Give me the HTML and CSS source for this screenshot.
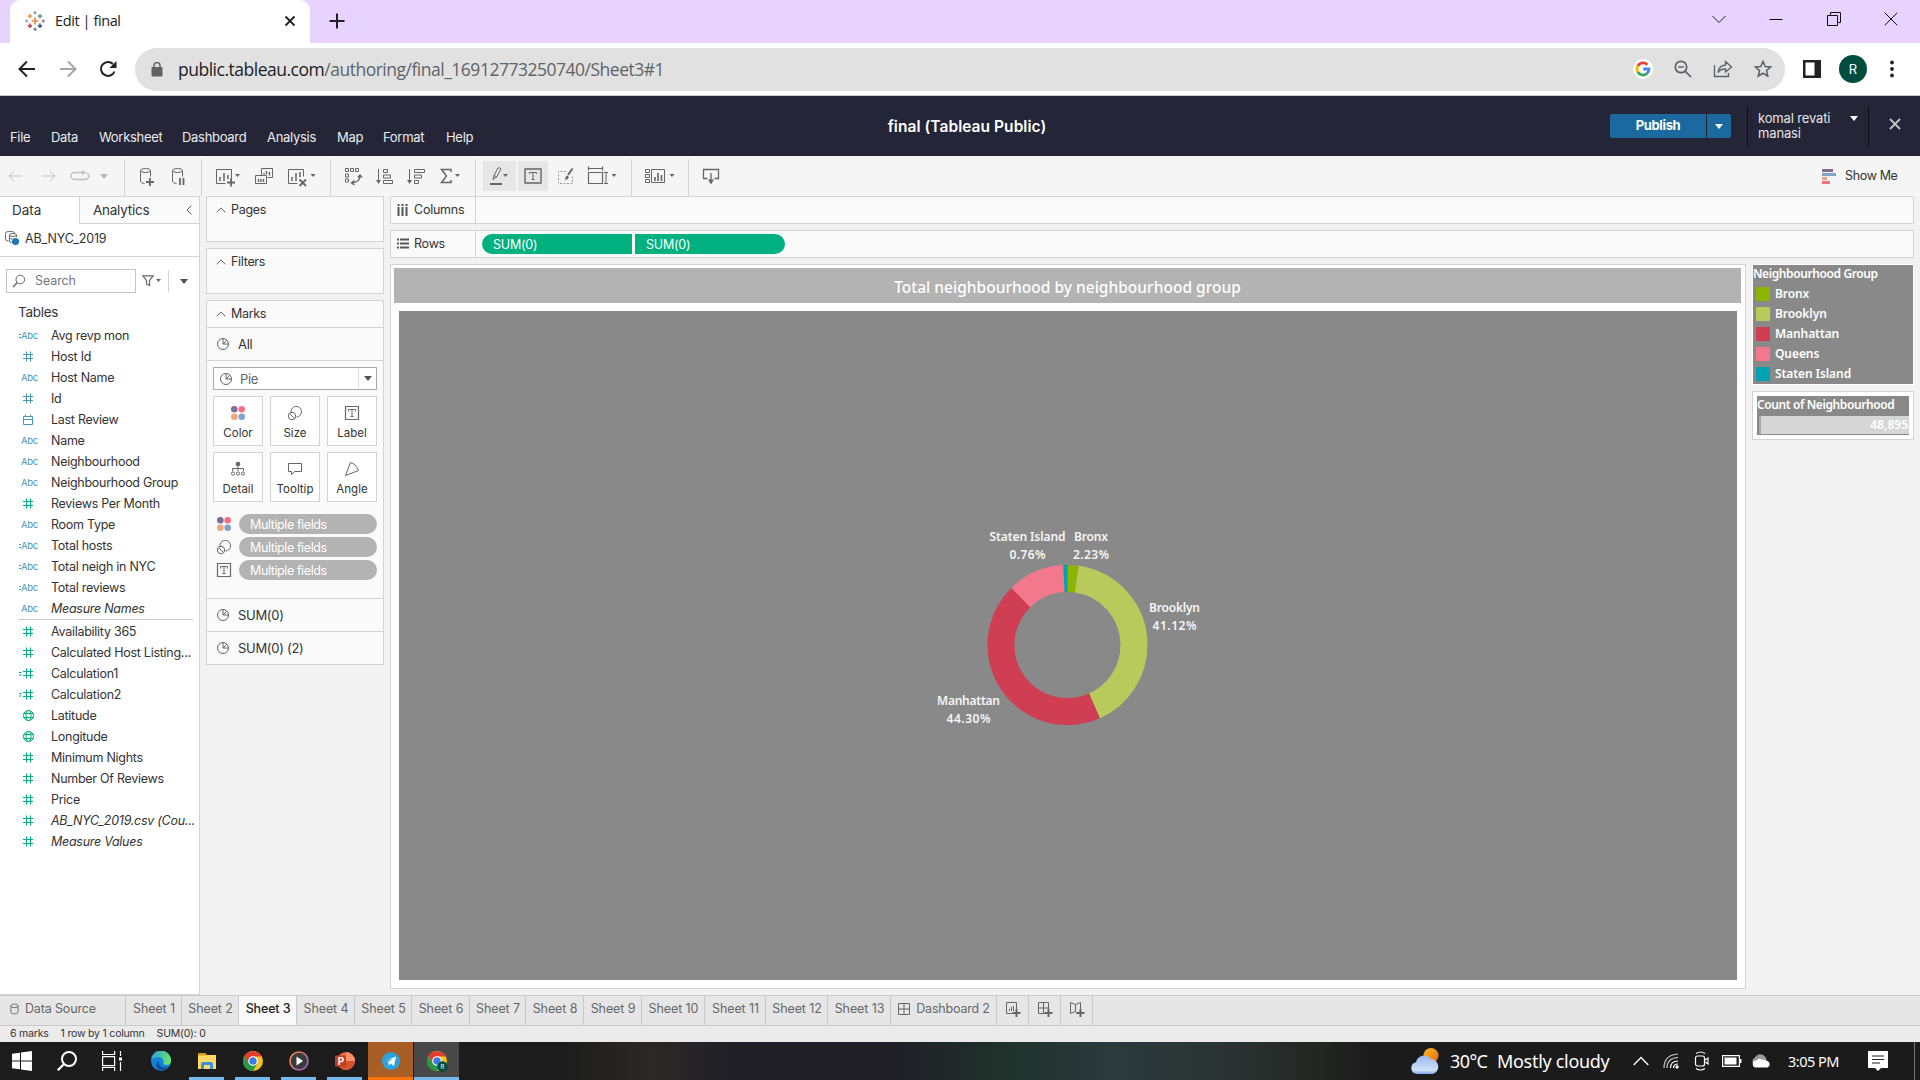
FILE: index.html
```
<!DOCTYPE html>
<html lang="en">
<head>
<meta charset="utf-8">
<title>Edit | final</title>
<link rel="stylesheet" href="styles.css">
</head>
<body>
<svg class="defs" width="0" height="0" aria-hidden="true">
  <symbol id="num" viewBox="0 0 20 14"><path d="M4 4.500h10M4 8.500h10M7.500 1.500v10M11.500 1.500v10" stroke="currentColor"/></symbol>
  <symbol id="cnum" viewBox="0 0 20 14"><path d="M4 4.500h10M4 8.500h10M7.500 1.500v10M11.500 1.500v10M0 5.500h2.500M0 8h2.500" stroke="currentColor"/></symbol>
  <symbol id="cal" viewBox="0 0 20 14"><path d="M4.500 3.500h9v8h-9zM4 6.500h10M6.500 1.500v2M11.500 1.500v2" stroke="currentColor" fill="none"/></symbol>
  <symbol id="globe" viewBox="0 0 20 14"><g stroke="currentColor" fill="none"><circle cx="9.500" cy="6.500" r="5"/><ellipse cx="9.500" cy="6.500" rx="2.500" ry="5"/><path d="M4.500 4.500h10M4.500 8.500h10"/></g></symbol>
  <symbol id="pie" viewBox="0 0 14 14"><g stroke="#666" fill="none"><circle cx="7" cy="7" r="5.500"/><path d="M7 7V1.500M7 7l3.900-3.900M7 7h5.500"/></g></symbol>
  <symbol id="dots4" viewBox="0 0 16 16"><circle cx="4.300" cy="4.300" r="3.300" fill="#806c98"/><circle cx="11.700" cy="4.300" r="3.300" fill="#f76f82"/><circle cx="4.300" cy="11.700" r="3.300" fill="#f5a479"/><circle cx="11.700" cy="11.700" r="3.300" fill="#7ea4cb"/></symbol>
  <symbol id="size" viewBox="0 0 16 16"><g stroke="#666" fill="none"><path d="M4 7.500a5.300 5.300 0 1 1 5.500 4.500"/><circle cx="5" cy="11" r="3.700"/><path d="M3 9l4 4"/></g></symbol>
  <symbol id="label" viewBox="0 0 16 16"><path d="M1.500 1.500h13v13h-13z" fill="none" stroke="#666" stroke-width="1.200"/><path d="M4.500 6.500v-2h7v2M8 4.500v7M6.500 11.500h3" fill="none" stroke="#666"/></symbol>
  <symbol id="up" viewBox="0 0 10 6"><path d="M.7 5.300L5 .9l4.300 4.400" fill="none" stroke="#666"/></symbol>
  <symbol id="caret" viewBox="0 0 8 5"><path d="M0 0h8L4 5z" fill="currentColor"/></symbol>
</svg>

<header class="tabstrip">
  <div class="browser-tab">
    <svg class="favicon" viewBox="0 0 20 20" width="20" height="20"><g stroke-width="1.700" fill="none"><path d="M10 6.500v7M6.500 10h7" stroke="#eb8b3c"/><path d="M5 3v4.400M2.800 5.200h4.400" stroke="#eda04e"/><path d="M15 3v4.400M12.800 5.200h4.400" stroke="#6c98a8"/><path d="M5 12.600v4.400M2.800 14.800h4.400" stroke="#d04a5c"/><path d="M15 12.600v4.400M12.800 14.800h4.400" stroke="#435f93"/></g><g stroke-width="1.100"><path d="M10 0v3.400M8.300 1.700h3.400" stroke="#6c98a8"/><path d="M10 16.600V20M8.300 18.300h3.400" stroke="#5b6591"/><path d="M1.700 8.300v3.400M0 10h3.400" stroke="#7d9fb5"/><path d="M18.300 8.300v3.400M16.600 10H20" stroke="#7771a0"/></g></svg>
    <span class="tab-title">Edit | final</span>
    <svg viewBox="0 0 12 12" width="12" height="12"><path d="M1.500 1.500l9 9M10.500 1.500l-9 9" stroke="#202124" stroke-width="1.800"/></svg>
  </div>
  <svg class="newtab" viewBox="0 0 16 16" width="16" height="16"><path d="M8 .5v15M.5 8h15" stroke="#202124" stroke-width="2"/></svg>
  <div class="window-controls">
    <span><svg viewBox="0 0 14 14" width="14" height="14"><path d="M.5 4L7 10.500 13.500 4" stroke="#222" fill="none"/></svg></span>
    <span><svg viewBox="0 0 14 14" width="14" height="14"><path d="M.5 7.500h13" stroke="#111"/></svg></span>
    <span><svg viewBox="0 0 14 14" width="14" height="14"><path d="M.5 3.500h10v10H.5zM3.500 3.500v-3h10v10h-3" stroke="#111" fill="none"/></svg></span>
    <span><svg viewBox="0 0 14 14" width="14" height="14"><path d="M.7.7l12.600 12.600M13.300.7L.7 13.300" stroke="#111"/></svg></span>
  </div>
</header>

<div class="browser-bar">
  <div class="nav-buttons">
    <span><svg viewBox="0 0 18 18" width="18" height="18"><path d="M17 9H2M9 1.500L1.500 9 9 16.500" fill="none" stroke="#202124" stroke-width="2"/></svg></span>
    <span><svg viewBox="0 0 18 18" width="18" height="18"><path d="M1 9h15M9 1.500L16.500 9 9 16.500" fill="none" stroke="#a4a5a7" stroke-width="2"/></svg></span>
    <span><svg viewBox="0 0 18 18" width="18" height="18"><path d="M15.500 11.500A7 7 0 1 1 14 4" fill="none" stroke="#202124" stroke-width="2"/><path d="M17.500 1v7h-7z" fill="#202124"/></svg></span>
  </div>
  <div class="omnibox">
    <svg viewBox="0 0 12 15" width="12" height="15"><path d="M1.500 5h9q1 0 1 1v7q0 1.500-1 1.500h-9q-1 0-1-1.500V6q0-1 1-1z" fill="#5f6368"/><path d="M3 6V3.500a3 3 0 0 1 6 0V6" fill="none" stroke="#5f6368" stroke-width="1.500"/></svg>
    <span class="url"><b>public.tableau.com</b>/authoring/final_16912773250740/Sheet3#1</span>
    <span class="omni-icon"><svg viewBox="0 0 20 20" width="20" height="20"><circle cx="10" cy="10" r="10" fill="#fff"/><g fill="none" stroke-width="2.800"><path d="M14.400 5.800A6 6 0 0 0 4.800 7" stroke="#ea4335"/><path d="M4.800 7a6 6 0 0 0 0 6" stroke="#fbbc05"/><path d="M4.800 13a6 6 0 0 0 9 1.700" stroke="#34a853"/><path d="M13.800 14.700A6 6 0 0 0 16 10h-5.800" stroke="#4285f4"/></g></svg></span>
    <span class="omni-icon"><svg viewBox="0 0 18 18" width="18" height="18"><g fill="none" stroke="#5f6368" stroke-width="1.700"><circle cx="7" cy="7" r="5.700"/><path d="M11.300 11.300l5.700 5.700M4.200 7h5.600"/></g></svg></span>
    <span class="omni-icon"><svg viewBox="0 0 20 20" width="20" height="20"><path d="M1.500 6v11.500h14V14M12.500 2.500L18.500 8l-6 5V10Q8 9.500 5 13.500 6 6.500 12.500 6z" fill="none" stroke="#5f6368" stroke-width="1.400"/></svg></span>
    <span class="omni-icon"><svg viewBox="0 0 20 20" width="20" height="20"><path d="M10 2.500l2.200 5 5.300.5-4 3.600 1.200 5.400L10 14.200 5.300 17l1.200-5.400-4-3.600 5.300-.5z" fill="none" stroke="#5f6368" stroke-width="1.600"/></svg></span>
  </div>
  <span class="chrome-icon"><svg viewBox="0 0 18 18" width="18" height="18"><path d="M0 0h18v18H0zM2.500 2.500v13h9v-13z" fill="#202124" fill-rule="evenodd"/></svg></span>
  <span class="avatar">R</span>
  <svg class="kebab" viewBox="0 0 4 18" width="4" height="18"><g fill="#202124"><circle cx="2" cy="2.500" r="1.900"/><circle cx="2" cy="9" r="1.900"/><circle cx="2" cy="15.500" r="1.900"/></g></svg>
</div>

<nav class="app-header">
  <div class="menu"><span>File</span><span>Data</span><span>Worksheet</span><span>Dashboard</span><span>Analysis</span><span>Map</span><span>Format</span><span>Help</span></div>
  <div class="doc-title">final (Tableau Public)</div>
  <div class="account">
    <span class="publish">Publish</span><span class="publish-more"><svg width="8" height="5"><use href="#caret"/></svg></span>
    <div class="user"><span>komal revati<br>manasi</span><svg width="8" height="5"><use href="#caret"/></svg></div>
    <svg class="close" viewBox="0 0 12 12" width="12" height="12"><path d="M1 1l10 10M11 1L1 11" stroke="#c3c3ca" stroke-width="1.800"/></svg>
  </div>
</nav>

<div class="toolbar">
  <div class="group g-undo">
    <svg viewBox="0 0 14 12" width="14" height="12"><path d="M14 6H1M6.500.7L1 6l5.500 5.300" fill="none" stroke="#c0c0c0"/></svg>
    <svg viewBox="0 0 14 12" width="14" height="12"><path d="M0 6h13M7.500.7L13 6l-5.500 5.300" fill="none" stroke="#c0c0c0"/></svg>
    <svg viewBox="0 0 20 12" width="20" height="12"><path d="M7 2.500H4.500a3.500 3.500 0 0 0 0 7h11a3.500 3.500 0 0 0 1.500-6.500M6 2.500h7" fill="none" stroke="#c0c0c0" stroke-width="1.400"/><path d="M12 0l4.500 2.500L12 5z" fill="#c0c0c0"/></svg>
    <svg viewBox="0 0 8 5" width="8" height="5"><path d="M0 0h8L4 5z" fill="#b8b8b8"/></svg>
  </div>
  <div class="group g-data">
    <svg viewBox="0 0 24 24" width="24" height="24"><g fill="none" stroke="#666"><ellipse cx="11.500" cy="6.500" rx="5" ry="2"/><path d="M6.500 6.500v11q1 2 4 2M16.500 6.500v6"/><path d="M16 14v8M12 18h8" stroke-width="1.800"/></g></svg>
    <svg viewBox="0 0 24 24" width="24" height="24"><g fill="none" stroke="#666"><ellipse cx="11.500" cy="6.500" rx="5" ry="2"/><path d="M6.500 6.500v11q1 2 4 2M16.500 6.500v6"/><path d="M14 14v7M17.500 14v7" stroke-width="1.800"/></g></svg>
  </div>
  <div class="group g-sheet">
    <svg viewBox="0 0 30 24" width="30" height="24"><g fill="none" stroke="#666"><path d="M12.500 19.500h-9v-14h15v10"/><path d="M7 17v-4M11 17V9M15 15v-4" stroke-width="1.500"/><path d="M18 14.500v8M14 18.500h8" stroke-width="1.800"/></g><path d="M22 10h5l-2.500 3z" fill="#666"/></svg>
    <svg viewBox="0 0 24 24" width="24" height="24"><g fill="none" stroke="#666"><path d="M9.500 11v-6.500h11v9h-5M3.500 11.500h11v8h-11z"/><path d="M12 10.500V9M14.500 10.500V7M17.500 11.500V8M6.500 18v-3M9 18v-3M11.500 18v-3" stroke-width="1.400"/></g></svg>
    <svg viewBox="0 0 32 24" width="32" height="24"><g fill="none" stroke="#666"><path d="M12.500 19.500h-9v-14h15v7"/><path d="M7 17v-4M11 17V9M15 13V8" stroke-width="1.500"/><path d="M14.500 15.500l6.500 6.500M21 15.500L14.500 22" stroke-width="1.800"/></g><path d="M25.500 10h5l-2.500 3z" fill="#666"/></svg>
  </div>
  <div class="group g-sort">
    <svg viewBox="0 0 24 24" width="24" height="24"><g fill="none" stroke="#666"><path d="M4.500 4.500h3v3h-3zM9.500 4.500h3v3h-3zM14.500 4.500h3v3h-3zM4.500 10h3v3h-3zM4.500 15h3v3h-3z"/><path d="M19 12c0 4-2 6-7.500 7M16.800 13.500L19 11l2 2.500M13.500 16.500L10.500 19l3 2" stroke-width="1.300"/></g></svg>
    <svg viewBox="0 0 24 24" width="24" height="24"><g fill="none" stroke="#666"><path d="M6.500 5v13"/><path d="M11.500 5.500h4v3h-4zM11.500 11h7v3h-7zM11.500 16.500h9v3h-9z"/></g><path d="M4 16h5l-2.500 4z" fill="#666"/></svg>
    <svg viewBox="0 0 24 24" width="24" height="24"><g fill="none" stroke="#666"><path d="M6.500 5v13"/><path d="M11.500 5.500h10v3h-10zM11.500 11h7v3h-7zM11.500 16.500h4v3h-4z"/></g><path d="M4 16h5l-2.500 4z" fill="#666"/></svg>
    <svg viewBox="0 0 30 24" width="30" height="24"><path d="M17 8V5.500H7.500l5 6.500-5 6.500H17V16" fill="none" stroke="#666" stroke-width="1.500"/><path d="M21 10h5l-2.500 3z" fill="#666"/></svg>
  </div>
  <div class="group g-format">
    <span class="active wide"><svg viewBox="0 0 33 24" width="33" height="24"><g fill="none" stroke="#666"><path d="M10 15.500l1-4 4-7.500q2-1 3 1L14 12.500l-4 3zM11 11.500l3 1.500"/><path d="M7 20h12" stroke-width="2"/></g><path d="M20 10h5l-2.500 3z" fill="#666"/></svg></span>
    <span class="active"><svg viewBox="0 0 18 16" width="18" height="16"><path d="M1 1h16v14H1z" fill="none" stroke="#666" stroke-width="1.400"/><path d="M5.500 6V4.500h7V6M9 4.500v7M7.500 11.500h3" fill="none" stroke="#666"/></svg></span>
    <svg class="brush" viewBox="0 0 24 24" width="24" height="24"><path d="M13 7.500H5.500v12h14V12" fill="none" stroke="#999" stroke-dasharray="2 1.500"/><path d="M19.500 4.500l-4.500 6.500" stroke="#666" stroke-width="2"/><path d="M14 11.500l1.800 1.500q-.8 3-4.300 3 1.500-1 1.200-3.200z" fill="#666"/></svg>
    <svg class="fit" viewBox="0 0 34 24" width="34" height="24"><g fill="none" stroke="#666"><path d="M3 4.500h15M3.500 2.500v4M17.500 2.500v4M3.500 8.500h14v11h-14z" stroke-width="1.200"/><path d="M21 8.500v11M19 8.500h4M19 19.500h4"/></g><path d="M26.500 10h5L29 13z" fill="#666"/></svg>
  </div>
  <div class="group g-cards">
    <svg viewBox="0 0 36 24" width="36" height="24"><g fill="none" stroke="#666"><path d="M4.500 5.500h4v3h-4zM4.500 10.500h4v3h-4zM4.500 15.500h4v3h-4zM10.500 5.500h13v13h-13z"/><path d="M14 17v-4M17 17V9M20.500 17v-6" stroke-width="1.600"/></g><path d="M28.500 10h5L31 13z" fill="#666"/></svg>
  </div>
  <div class="group g-export">
    <svg viewBox="0 0 24 24" width="24" height="24"><path d="M8.500 14.500h-4v-9h15v9h-4M12 9v8" fill="none" stroke="#666" stroke-width="1.300"/><path d="M9 15.500h6l-3 5z" fill="#666"/></svg>
  </div>
  <div class="show-me"><svg viewBox="0 0 14 15" width="14" height="15"><path d="M0 0h11v3H0z" fill="#806c98"/><path d="M0 4h14v3H0z" fill="#7ea4cb"/><path d="M0 8h5v3H0z" fill="#f5a479"/><path d="M0 12h8v3H0z" fill="#f76f82"/></svg>Show Me</div>
</div>

<main class="workspace">
  <aside class="data-pane">
    <div class="pane-tabs"><span class="on">Data</span><span class="off">Analytics<svg viewBox="0 0 6 10" width="6" height="10"><path d="M5.300.7L1 5l4.300 4.300" fill="none" stroke="#555"/></svg></span></div>
    <div class="source"><svg viewBox="0 0 15 15" width="15" height="15"><g fill="none" stroke="#666"><path d="M3.500 10Q.5 10 .5 8V2.500q0-2 3-2h3q3 0 3 1.500"/><ellipse cx="8" cy="4" rx="3.500" ry="1.500"/><path d="M4.500 4v6q0 1.500 2 1.500M11.500 4v2M4.500 7q1 1 3 1"/></g><circle cx="10.500" cy="10.500" r="3.600" fill="#1f77b4"/></svg>AB_NYC_2019</div>
    <div class="search-row">
      <div class="search"><svg viewBox="0 0 14 14" width="14" height="14"><circle cx="8.300" cy="5.500" r="4.300" fill="none" stroke="#666"/><path d="M5.300 8.500L1 13" stroke="#666" stroke-width="1.400"/></svg>Search</div>
      <svg class="filter" viewBox="0 0 20 12" width="20" height="12"><path d="M.8.8h10.400L7.500 5.500v5L4.500 9V5.500z" fill="none" stroke="#666" stroke-width="1.200"/><path d="M14 4h5l-2.500 3z" fill="#666"/></svg>
      <span class="more"><svg width="8" height="5"><use href="#caret"/></svg></span>
    </div>
    <h3>Tables</h3>
    <ul class="fields">
      <li><b class="calc">Abc</b>Avg revp mon</li>
      <li><svg><use href="#num"/></svg>Host Id</li>
      <li><b>Abc</b>Host Name</li>
      <li><svg><use href="#num"/></svg>Id</li>
      <li><svg><use href="#cal"/></svg>Last Review</li>
      <li><b>Abc</b>Name</li>
      <li><b>Abc</b>Neighbourhood</li>
      <li><b>Abc</b>Neighbourhood Group</li>
      <li class="measure"><svg><use href="#num"/></svg>Reviews Per Month</li>
      <li><b>Abc</b>Room Type</li>
      <li><b class="calc">Abc</b>Total hosts</li>
      <li><b class="calc">Abc</b>Total neigh in NYC</li>
      <li><b class="calc">Abc</b>Total reviews</li>
      <li><b>Abc</b><i>Measure Names</i></li>
    </ul>
    <ul class="fields measures">
      <li><svg><use href="#num"/></svg>Availability 365</li>
      <li><svg><use href="#num"/></svg>Calculated Host Listing...</li>
      <li><svg><use href="#cnum"/></svg>Calculation1</li>
      <li><svg><use href="#cnum"/></svg>Calculation2</li>
      <li><svg><use href="#globe"/></svg>Latitude</li>
      <li><svg><use href="#globe"/></svg>Longitude</li>
      <li><svg><use href="#num"/></svg>Minimum Nights</li>
      <li><svg><use href="#num"/></svg>Number Of Reviews</li>
      <li><svg><use href="#num"/></svg>Price</li>
      <li><svg><use href="#num"/></svg><i>AB_NYC_2019.csv (Cou...</i></li>
      <li><svg><use href="#num"/></svg><i>Measure Values</i></li>
    </ul>
  </aside>

  <div class="cards">
    <section class="card small"><h4><svg width="10" height="6"><use href="#up"/></svg>Pages</h4></section>
    <section class="card small"><h4><svg width="10" height="6"><use href="#up"/></svg>Filters</h4></section>
    <section class="card marks">
      <h4><svg width="10" height="6"><use href="#up"/></svg>Marks</h4>
      <div class="mark-row"><svg width="14" height="14"><use href="#pie"/></svg>All</div>
      <div class="mark-body">
        <div class="select"><svg width="14" height="14"><use href="#pie"/></svg>Pie<span class="drop"><svg width="8" height="5"><use href="#caret"/></svg></span></div>
        <div class="mark-buttons">
          <div><svg width="16" height="16"><use href="#dots4"/></svg>Color</div>
          <div><svg width="16" height="16"><use href="#size"/></svg>Size</div>
          <div><svg width="16" height="16"><use href="#label"/></svg>Label</div>
          <div><svg viewBox="0 0 16 16" width="16" height="16"><circle cx="8" cy="3" r="2.300" fill="#666"/><g fill="none" stroke="#666"><path d="M8 4v6M2.500 10V7.500h11V10"/><circle cx="3" cy="12.500" r="1.600"/><circle cx="8" cy="12.500" r="1.600"/><circle cx="13" cy="12.500" r="1.600"/></g></svg>Detail</div>
          <div><svg viewBox="0 0 16 16" width="16" height="16"><path d="M1.500 2.500h13v8H7.500l-3 3v-3h-3z" fill="none" stroke="#666"/></svg>Tooltip</div>
          <div><svg viewBox="0 0 16 16" width="16" height="16"><path d="M1.500 14.500L6.500 1.500Q12 3 14.500 9.500z" fill="none" stroke="#666"/></svg>Angle</div>
        </div>
        <div class="pill-row"><svg width="16" height="16"><use href="#dots4"/></svg><span>Multiple fields</span></div>
        <div class="pill-row"><svg width="16" height="16"><use href="#size"/></svg><span>Multiple fields</span></div>
        <div class="pill-row"><svg width="16" height="16"><use href="#label"/></svg><span>Multiple fields</span></div>
      </div>
      <div class="mark-row"><svg width="14" height="14"><use href="#pie"/></svg>SUM(0)</div>
      <div class="mark-row"><svg width="14" height="14"><use href="#pie"/></svg>SUM(0) (2)</div>
    </section>
  </div>

  <div class="canvas">
    <div class="shelf"><div class="shelf-label"><svg viewBox="0 0 12 12" width="12" height="12"><path d="M1.500 3v9M5.500 3v9M9.500 3v9M1.500 0v2M5.500 0v2M9.500 0v2" stroke="#555" stroke-width="2"/></svg>Columns</div></div>
    <div class="shelf"><div class="shelf-label"><svg viewBox="0 0 12 12" width="12" height="12"><path d="M3 1.500h9M3 5.500h9M3 9.500h9M0 1.500h2M0 5.500h2M0 9.500h2" stroke="#555" stroke-width="2"/></svg>Rows</div><span class="green first">SUM(0)</span><span class="green end">SUM(0)</span></div>
    <div class="view-row">
      <section class="sheet">
        <h2>Total neighbourhood by neighbourhood group</h2>
        <svg class="chart" viewBox="399 311 1338 669" width="1338" height="669">
          <rect x="399" y="311" width="1338" height="669" fill="#898989"/>
          <g fill="none" stroke-width="27" transform="rotate(-90 1067.500 645)">
            <circle cx="1067.500" cy="645" r="66.500" pathLength="100" stroke="#8cb400" stroke-dasharray="2.230 97.770"/>
            <circle cx="1067.500" cy="645" r="66.500" pathLength="100" stroke="#b9ca5d" stroke-dasharray="41.120 58.880" stroke-dashoffset="-2.230"/>
            <circle cx="1067.500" cy="645" r="66.500" pathLength="100" stroke="#cf3e53" stroke-dasharray="44.300 55.700" stroke-dashoffset="-43.350"/>
            <circle cx="1067.500" cy="645" r="66.500" pathLength="100" stroke="#f4788c" stroke-dasharray="11.490 88.510" stroke-dashoffset="-87.650"/>
            <circle cx="1067.500" cy="645" r="66.500" pathLength="100" stroke="#00a2b3" stroke-dasharray="0.860 99.140" stroke-dashoffset="-99.140"/>
          </g>
          <g class="chart-labels" text-anchor="middle">
            <text x="1027.500" y="541" textLength="76">Staten Island</text><text x="1027.500" y="559" textLength="36">0.76%</text>
            <text x="1091" y="541" textLength="34">Bronx</text><text x="1091" y="559" textLength="36">2.23%</text>
            <text x="1174.500" y="612" textLength="51">Brooklyn</text><text x="1174.500" y="630" textLength="44">41.12%</text>
            <text x="968.500" y="705" textLength="63">Manhattan</text><text x="968.500" y="723" textLength="44">44.30%</text>
          </g>
        </svg>
      </section>
      <div class="legends">
        <section class="legend">
          <h5>Neighbourhood Group</h5>
          <div><i class="c1"></i>Bronx</div><div><i class="c2"></i>Brooklyn</div><div><i class="c3"></i>Manhattan</div><div><i class="c4"></i>Queens</div><div><i class="c5"></i>Staten Island</div>
        </section>
        <section class="count"><div class="count-inner"><h5>Count of Neighbourhood</h5><div class="ramp">48,895</div></div></section>
      </div>
    </div>
  </div>
</main>

<div class="sheet-tabs">
  <span class="source-tab"><svg viewBox="0 0 10 12" width="9" height="12"><path d="M1 2.500v7q0 2 4 2t4-2v-7q0-2-4-2t-4 2q0 2 4 2t4-2" fill="none" stroke="#666"/></svg>Data Source</span>
  <span>Sheet 1</span><span>Sheet 2</span><span class="current">Sheet 3</span><span>Sheet 4</span><span>Sheet 5</span><span>Sheet 6</span><span>Sheet 7</span><span>Sheet 8</span><span>Sheet 9</span><span>Sheet 10</span><span>Sheet 11</span><span>Sheet 12</span><span>Sheet 13</span>
  <span class="dash"><svg viewBox="0 0 12 12" width="12" height="12"><path d="M.5.5h11v11H.5zM6 .5v11M.5 6h11" fill="none" stroke="#666"/></svg>Dashboard 2</span>
  <span><svg viewBox="0 0 16 16" width="16" height="16"><path d="M8 12.500H1.500v-11h10V9M4.500 10V8M6.500 10V6M8.500 10V5" fill="none" stroke="#666"/><path d="M11.500 8v8M7.500 12h8" stroke="#666" stroke-width="2"/></svg></span>
  <span><svg viewBox="0 0 16 16" width="16" height="16"><path d="M8 12.500H1.500v-11h10V9M6.500 1.500v11M1.500 7h10" fill="none" stroke="#666"/><path d="M11.500 8v8M7.500 12h8" stroke="#666" stroke-width="2"/></svg></span>
  <span><svg viewBox="0 0 16 16" width="16" height="16"><path d="M8 12L6.500 10.500 1.500 12.500v-11L6.500 3.500l5-2V8M6.500 3.500v7" fill="none" stroke="#666"/><path d="M11.500 8v8M7.500 12h8" stroke="#666" stroke-width="2"/></svg></span>
</div>
<div class="status"><span>6 marks</span><span>1 row by 1 column</span><span>SUM(0): 0</span></div>

<footer class="taskbar">
  <div class="apps">
    <span><svg viewBox="0 0 20 20" width="20" height="20"><path d="M0 2.800L8 1.700v7.800H0zM9 1.500L20 0v9.500H9zM0 10.500h8v7.800l-8-1.100zM9 10.500h11V20L9 18.500z" fill="#fff"/></svg></span>
    <span><svg viewBox="0 0 20 20" width="20" height="20"><circle cx="12" cy="8" r="7" fill="none" stroke="#fff" stroke-width="2"/><path d="M7 13l-6.300 6.300" stroke="#fff" stroke-width="2.200"/></svg></span>
    <span><svg viewBox="0 0 20 20" width="20" height="20"><g fill="none" stroke="#fff" stroke-width="1.200"><path d="M.6 0v3.500h12V0M.6 5.600h12v9H.6zM.6 20v-3.500h12V20M18.500 0v5M18.500 11v9"/></g><path d="M17 6.500h3v3h-3z" fill="#fff"/></svg></span>
    <span><svg viewBox="0 0 20 20" width="20" height="20"><defs><linearGradient id="edge" x1="0" y1="0" x2="1" y2=".3"><stop offset="0" stop-color="#249fe0"/><stop offset="1" stop-color="#67df75"/></linearGradient></defs><circle cx="10" cy="10" r="10" fill="#1482d8"/><path d="M0 9a10 10 0 0 1 20 1q0 4-5 4-3 0-2.500-2Q13 6.500 7.500 6 2 6 0 9z" fill="url(#edge)"/><path d="M7 18.500Q3 13 7.500 9.500q-.5 6 5.500 7 3 .5 6-1.500a10 10 0 0 1-12 3.500z" fill="#0d4f9b"/></svg></span>
    <span class="open"><svg viewBox="0 0 20 20" width="20" height="20"><path d="M1 2h7l2 2h9v14H1z" fill="#ffd866"/><path d="M1 2h7l1.500 2.500H1z" fill="#d99b17"/><path d="M4 18v-5q0-2 2-2h8q2 0 2 2v5h-3v-4H7v4z" fill="#3791dc"/></svg></span>
    <span class="open"><svg viewBox="0 0 20 20" width="20" height="20" id="chrome-logo"><circle cx="10" cy="10" r="10" fill="#fbc116"/><path d="M1.300 5A10 10 0 0 1 18.700 5.500H10L5.700 12.500z" fill="#e33b2e"/><path d="M1.300 5A10 10 0 0 0 10 20l4.300-7.500H5.700z" fill="#279847"/><circle cx="10" cy="10" r="4.800" fill="#fff"/><circle cx="10" cy="10" r="3.700" fill="#3a7de9"/></svg></span>
    <span class="open"><svg viewBox="0 0 20 20" width="20" height="20"><defs><linearGradient id="play" x1="0" y1="0" x2="1" y2="1"><stop offset="0" stop-color="#ff8a3c"/><stop offset="1" stop-color="#8e5bd0"/></linearGradient></defs><circle cx="10" cy="10" r="9" fill="#3b3b3d" stroke="url(#play)" stroke-width="1.700"/><path d="M7.500 5.500l6.500 4.500-6.500 4.500z" fill="#fff"/></svg></span>
    <span class="open"><svg viewBox="0 0 20 20" width="20" height="20"><circle cx="11" cy="10" r="9" fill="#ed6c47"/><path d="M11 10h9a9 9 0 0 1-17 4z" fill="#d35230"/><path d="M11 1a9 9 0 0 1 9 9h-9z" fill="#ff8f6b"/><rect x="0" y="4.500" width="11" height="11" rx="1" fill="#c43e1c"/><text x="2.700" y="13.500" class="ppt">P</text></svg></span>
    <span class="alert"><svg viewBox="0 0 20 20" width="20" height="20"><circle cx="10" cy="10" r="9" fill="#2ba3dc"/><path d="M3.500 10l11.500-4.500-2 9.500-3.500-2.500-1.700 2-.8-3.500 5-3.500z" fill="#fff"/></svg></span>
    <span class="focused"><svg viewBox="0 0 22 22" width="22" height="22"><use href="#chrome-logo"/><circle cx="15.500" cy="15.500" r="5.200" fill="#004d40"/><text x="13.500" y="18" class="mini">R</text></svg></span>
  </div>
  <div class="tray">
    <svg class="weather" viewBox="0 0 30 26" width="30" height="26"><defs><linearGradient id="sun" x1="0" y1="0" x2="1" y2="1"><stop offset="0" stop-color="#f6b72b"/><stop offset="1" stop-color="#ef6a05"/></linearGradient><linearGradient id="cloud" x1="0" y1="0" x2="0" y2="1"><stop offset="0" stop-color="#98b9f3"/><stop offset=".8" stop-color="#cfe0f8"/><stop offset="1" stop-color="#7b9fe8"/></linearGradient></defs><circle cx="21" cy="7.500" r="7.500" fill="url(#sun)"/><path d="M6.500 26a6 6 0 0 1-.5-11.800 8.500 8.500 0 0 1 15-3.200 7.700 7.700 0 0 1 2 15z" fill="url(#cloud)"/></svg>
    <span class="temp">30°C</span><span class="cond">Mostly cloudy</span>
    <svg class="t1" viewBox="0 0 16 10" width="16" height="10"><path d="M.7 9L8 1.500 15.300 9" fill="none" stroke="#fff" stroke-width="1.300"/></svg>
    <svg class="t2" viewBox="0 0 16 16" width="16" height="16"><g fill="none" stroke="#fff" stroke-width="1.200"><path d="M1 15Q1 2 15 1M4 15q0-10 11-10.500" opacity=".75"/><path d="M7.500 15q0-7 7.500-7M10.500 15q0-4 4.500-4"/></g><circle cx="14" cy="14" r="1.700" fill="#fff"/></svg>
    <svg class="t3" viewBox="0 0 16 20" width="16" height="20"><g fill="none" stroke="#fff" stroke-width="1.200"><rect x="1.500" y="5" width="9" height="10" rx="2"/><path d="M11 9l3-2v6l-3-2M2 2.500Q6.500-.5 11 2.500M2 17.500q4.500 3 9 0"/></g></svg>
    <svg class="t4" viewBox="0 0 20 12" width="20" height="12"><path d="M.6.600h16.800v10.800H.6z" fill="none" stroke="#fff" stroke-width="1.200"/><path d="M2.500 2.500h12v7h-12zM18 4h1.500v4H18z" fill="#fff"/></svg>
    <svg class="t5" viewBox="0 0 20 14" width="20" height="14"><path d="M4 11a4 4 0 0 1 0-7.500 6 6 0 0 1 10.500-.5l1 3z" fill="#999"/><path d="M5 13.500a3.500 3.500 0 0 1 .5-7q2-3 5.500-1 4 0 5.500 1.500a3.500 3.500 0 0 1 0 6.500z" fill="#fff"/></svg>
    <span class="time">3:05 PM</span>
    <svg class="notes" viewBox="0 0 20 20" width="20" height="20"><path d="M0 0h20v17h-7l-3 3-3-3H0z" fill="#fff"/><path d="M4 5h12M4 8.500h12M4 12h8" stroke="#222" stroke-width="1.200"/></svg>
    <i class="desk"></i>
  </div>
</footer>
</body>
</html>
```
FILE: styles.css
```
* { box-sizing: border-box; }
body { margin: 0; width: 1920px; height: 1080px; overflow: hidden; display: flex; flex-direction: column; background: #f2f2f2; color: #333; font: 13px/16px Inter, "Liberation Sans", sans-serif; }
svg { display: block; flex: none; }
.defs { position: absolute; }
h2, h3, h4, h5, ul { margin: 0; padding: 0; font-weight: 400; }

/* Browser chrome */
.tabstrip { height: 43px; background: #e8d3ff; display: flex; align-items: flex-start; padding-left: 10px; font-family: "Open Sans", sans-serif; }
.browser-tab { width: 300px; height: 43px; background: #fff; border-radius: 10px 10px 0 0; display: flex; align-items: center; padding: 0 14px 1px 15px; }
.tab-title { flex: 1; margin-left: 10px; font-size: 14.500px; letter-spacing: -.4px; color: #202124; }
.newtab { margin: 13px 0 0 19px; }
.window-controls { margin-left: auto; display: flex; height: 38px; }
.window-controls span { width: 57.500px; display: flex; align-items: center; justify-content: center; }
.browser-bar { height: 53px; background: #fff; border-bottom: 1px solid #c9c9c9; display: flex; align-items: center; padding: 0 26px 0 7px; }
.nav-buttons { display: flex; width: 128px; }
.nav-buttons span { width: 40.500px; display: flex; justify-content: center; }
.omnibox { width: 1650px; height: 43px; border-radius: 22px; background: #e1e1e1; display: flex; align-items: center; padding: 0 2px 0 16px; }
.url { flex: 1; margin-left: 15px; font: 17.500px/24px "Open Sans", sans-serif; letter-spacing: -.49px; color: #606367; }
.url b { font-weight: 400; color: #202124; }
.omni-icon { width: 40px; display: flex; justify-content: center; }
.chrome-icon { margin-left: 18px; }
.avatar { margin-left: 18px; width: 28px; height: 28px; border-radius: 50%; background: #004d40; color: #fff; text-align: center; line-height: 28px; font-size: 13px; }
.kebab { margin-left: auto; }

/* Application header */
.app-header { height: 60px; background: #242638; color: #ebebee; display: grid; grid-template-columns: 600px 1fr 320px; }
.menu { display: grid; grid-template-columns: 41px 48px 83px 85px 70px 46px 63px 40px; padding: 33px 0 0 10px; font-size: 13px; letter-spacing: -.3px; }
.doc-title { justify-self: center; margin: 21px 266px 0 0; font-size: 15.500px; line-height: 19px; font-weight: 600; color: #fff; width: max-content; letter-spacing: .05px; }
.account { display: flex; align-items: flex-start; padding: 10px 0 0 10px; color: #fff; }
.publish { width: 96px; height: 24px; margin-top: 8px; background: #1b699f; border-radius: 2px 0 0 2px; text-align: center; line-height: 23px; font-weight: 700; letter-spacing: -.35px; }
.publish-more { width: 24px; height: 24px; margin: 8px 0 0 1px; background: #1b699f; border-radius: 0 2px 2px 0; display: flex; align-items: center; justify-content: center; }
.user { margin-left: 16px; width: 122px; height: 40px; border: solid #0e0f16; border-width: 0 1px; display: flex; justify-content: space-between; padding: 5px 10px 0 10px; line-height: 15px; color: #e4e4e8; letter-spacing: -.15px; }
.user svg { margin-top: 5px; color: #fff; }
.close { margin: 12px 0 0 20px; }

/* Toolbar */
.toolbar { height: 40px; background: #f5f5f5; display: flex; }
.group { height: 37px; margin-top: 3px; border-right: 1px solid #d3d3d3; display: flex; align-items: center; padding-bottom: 3px; }
.g-undo { width: 125px; padding-left: 8px; gap: 15px; }
.g-undo svg:nth-child(2) { margin-left: 5px; }
.g-undo svg:nth-child(3) { margin-left: -1px; }
.g-undo svg:nth-child(4) { margin-left: -5px; }
.g-data { width: 77px; padding-left: 9px; gap: 8px; }
.g-sheet { width: 129px; padding-left: 11px; gap: 9px; }
.g-sort { width: 145px; padding-left: 10px; gap: 7px; }
.g-format { width: 156px; padding-left: 7px; }
.active { width: 30px; height: 30px; margin-left: 2px; background: #e6e6e6; display: flex; align-items: center; justify-content: center; }
.active.wide { width: 33px; margin-left: 0; }
.brush { margin-left: 5px; }
.fit { margin-left: 8px; }
.g-cards { width: 57px; padding-left: 9px; }
.g-export { padding-left: 10px; border: 0; }
.show-me { margin-left: auto; width: 98px; display: flex; align-items: center; gap: 9px; font-size: 12.500px; letter-spacing: -.35px; }

/* Data pane */
.workspace { height: 799px; display: flex; align-items: flex-start; }
.data-pane { width: 200px; height: 799px; background: #fff; border: solid #d3d3d3; border-width: 1px 1px 1px 0; }
.pane-tabs { display: flex; height: 27px; font-size: 13.500px; line-height: 27px; }
.on { width: 79px; padding-left: 12px; }
.off { flex: 1; background: #fafafa; border: solid #d3d3d3; border-width: 0 0 1px 1px; padding: 0 7px 0 13px; display: flex; align-items: center; justify-content: space-between; letter-spacing: -.25px; }
.source { height: 33px; border-bottom: 1px solid #d3d3d3; display: flex; gap: 5px; padding: 7px 0 0 5px; font-size: 12.500px; letter-spacing: -.15px; }
.search-row { display: flex; align-items: center; padding: 12px 0 0 6px; }
.search { width: 130px; height: 24px; border: 1px solid #c4c4c4; display: flex; align-items: center; gap: 9px; padding-left: 5px; color: #777; font-size: 12.500px; letter-spacing: -.1px; }
.filter { margin-left: 6px; }
.more { margin-left: 6px; height: 22px; border-left: 1px solid #d3d3d3; display: flex; align-items: center; padding-left: 11px; color: #555; }
h3 { font-size: 13.500px; line-height: 18px; margin: 10px 0 4px 18px; letter-spacing: -.3px; }
.fields { list-style: none; padding-left: 19px; }
.fields li { height: 21px; display: flex; align-items: center; gap: 12px; white-space: nowrap; font-size: 12.500px; letter-spacing: -.27px; line-height: 21px; }
.fields svg { width: 20px; height: 14px; color: #4996b2; }
.fields b { width: 20px; padding-left: 2px; font-size: 9.500px; font-weight: 400; letter-spacing: -.3px; color: #4996b2; }
.fields .calc { background: linear-gradient(#4996b2 1px, transparent 1px 3px, #4996b2 3px 4px) 0 9px / 2px 4px no-repeat; }
.measure svg, .measures svg { color: #00b180; }
.measures { border-top: 1px solid #c9c9c9; margin: 0 6px 0 18px; padding: 1px 0 0 1px; }

/* Cards */
.cards { width: 178px; margin-left: 6px; display: flex; flex-direction: column; gap: 6px; }
.card { background: #fafafa; border: 1px solid #d3d3d3; }
.small { height: 46px; }
h4 { height: 26px; display: flex; align-items: center; gap: 5px; padding-left: 9px; font-size: 12.500px; letter-spacing: -.3px; }
.marks { height: 365px; }
.mark-row { height: 33px; border-top: 1px solid #d3d3d3; display: flex; align-items: center; gap: 8px; padding-left: 9px; letter-spacing: -.3px; }
.mark-body { height: 238px; border-top: 1px solid #d3d3d3; padding: 6px; }
.select { height: 23px; border: 1px solid #aaa; background: #fff; display: flex; align-items: center; gap: 7px; padding-left: 5px; color: #666; letter-spacing: -.3px; }
.drop { margin-left: auto; width: 18px; height: 21px; border-left: 1px solid #ddd; display: flex; align-items: center; justify-content: center; color: #555; }
.mark-buttons { display: grid; grid-template-columns: repeat(3, 50px); gap: 6px 7px; margin: 6px 0 12px; }
.mark-buttons div { height: 50px; border: 1px solid #d3d3d3; background: #fff; display: flex; flex-direction: column; align-items: center; gap: 4px; padding-top: 8px; font-size: 11.500px; line-height: 16px; letter-spacing: 0; }
.pill-row { display: flex; align-items: center; gap: 7px; height: 20px; margin-bottom: 3px; padding-left: 3px; }
.pill-row span { flex: 1; height: 20px; border-radius: 10px; background: #b3b3b3; color: #fff; padding-left: 11px; font-size: 12.500px; line-height: 22px; letter-spacing: -.4px; }

/* Shelves and worksheet */
.canvas { width: 1524px; margin-left: 6px; display: flex; flex-direction: column; gap: 6px; }
.shelf { height: 28px; background: #fafafa; border: 1px solid #d3d3d3; display: flex; align-items: center; }
.shelf-label { width: 85px; height: 26px; border-right: 1px solid #d3d3d3; display: flex; align-items: center; gap: 5px; padding-left: 6px; font-size: 12.500px; letter-spacing: -.25px; }
.green { width: 150px; height: 20px; background: #00b180; color: #fff; line-height: 22px; padding-left: 11px; font-size: 12.500px; letter-spacing: -.2px; }
.first { margin-left: 6px; border-radius: 10px 0 0 10px; }
.end { margin-left: 3px; border-radius: 0 10px 10px 0; }
.view-row { display: flex; align-items: flex-start; gap: 6px; }
.sheet { width: 1356px; height: 725px; background: #fff; border: 1px solid #d3d3d3; padding: 3px 4px 0 3px; }
h2 { height: 35px; background: #b3b3b3; color: #fff; text-align: center; font: 500 15.500px/38px "Noto Sans", sans-serif; letter-spacing: .02px; }
.chart { margin: 8px 0 0 5px; }
.chart-labels { fill: #f5f5f5; font: 600 12px "Noto Sans", sans-serif; }
.legends { width: 162px; display: flex; flex-direction: column; gap: 6px; color: #fff; font: 600 12px/20px "Noto Sans", sans-serif; }
.legend { height: 121px; background: #898989; border: 1px solid #fff; }
h5 { font: 600 12px/18px "Noto Sans", sans-serif; letter-spacing: -.4px; white-space: nowrap; }
.legend h5 { height: 19px; }
.legend div { height: 20px; display: flex; align-items: center; gap: 5px; padding-left: 3px; letter-spacing: -.08px; }
.legend i { width: 14px; height: 14px; border-radius: 1px; }
.c1 { background: #8cb400; } .c2 { background: #b9ca5d; } .c3 { background: #cf3e53; } .c4 { background: #f4788c; } .c5 { background: #00a2b3; }
.count { height: 49px; border: 1px solid #d3d3d3; background: #fff; padding: 4px; }
.count-inner { height: 39px; background: #898989; }
.count h5 { height: 20px; }
.ramp { margin-left: 2px; height: 18px; background: linear-gradient(90deg, #aaa 2px, #d6d6d6 2px); text-align: right; line-height: 18px; padding-right: 1px; }

/* Sheet tabs and status */
.sheet-tabs { height: 31px; background: #e6e6e6; border: solid #c9c9c9; border-width: 1px 0; display: grid; grid-template-columns: 126px 56px 57px 58px 58px 57px 58px 56px 58px 58px 63px 61px 62px 63px 106px 32px 32px 32px; color: #666; font-size: 12.500px; letter-spacing: -.1px; }
.sheet-tabs span { border-right: 1px solid #c9c9c9; display: flex; align-items: center; justify-content: center; padding: 0 0 4px 1px; white-space: nowrap; }
.sheet-tabs .source-tab { justify-content: flex-start; gap: 6px; padding-left: 10px; letter-spacing: -.15px; }
.sheet-tabs .dash { gap: 6px; letter-spacing: -.2px; }
.sheet-tabs .current { background: #fafafa; color: #222; font-weight: 500; letter-spacing: -.15px; }
.status { height: 16px; background: #ebebeb; display: flex; gap: 12px; padding-left: 10px; font-size: 10.500px; line-height: 16px; letter-spacing: -.2px; }

/* Windows taskbar */
.taskbar { height: 38px; display: flex; justify-content: space-between; color: #fff; background: linear-gradient(90deg, #1c1c1c 560px, #2b2926 650px, #201f26 740px, #201f26 890px, #20322b 1010px, #2b3a3d 1110px, #2b3433 1220px, #232623 1320px, #1b1b1b 1370px); }
.apps { display: flex; }
.apps span { width: 45px; height: 38px; margin-right: 1px; display: flex; align-items: center; justify-content: center; }
.apps span:nth-child(-n+3) { margin-right: 0; padding-right: 1px; }
.apps span:nth-child(4) { margin-left: 3px; }
.apps .open { background: linear-gradient(#76b9ed, #76b9ed) center bottom / 35px 3px no-repeat; }
.apps .alert { background: #a95e26; border-bottom: 3px solid #ff7200; padding-top: 3px; }
.apps .focused { background: #484848; border-bottom: 3px solid #76b9ed; padding: 5px 0 0 2px; }
.ppt { font: 700 10px Inter, sans-serif; fill: #fff; }
.mini { font: 6px Inter, sans-serif; fill: #fff; }
.tray { width: 511px; display: flex; align-items: center; font-family: "Noto Sans", sans-serif; }
.weather { margin-left: 1px; }
.temp { margin-left: 10px; width: 47px; font-size: 18px; letter-spacing: -.6px; }
.cond { width: 111px; font-size: 18px; letter-spacing: -.3px; white-space: nowrap; }
.t1 { margin-left: 25px; } .t2 { margin-left: 14px; } .t3 { margin-left: 15px; } .t4 { margin-left: 12px; } .t5 { margin-left: 9px; }
.time { margin-left: 17px; width: 54px; font-size: 14.500px; letter-spacing: -.5px; white-space: nowrap; }
.notes { margin-left: 26px; }
.desk { margin-left: auto; width: 6px; height: 38px; border-left: 1px solid #777; }
```
